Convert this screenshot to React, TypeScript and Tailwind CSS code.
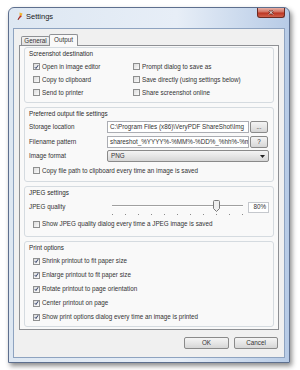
import React from "react";

const Check = ({ checked }: { checked?: boolean }) => (
  <div className="w-[7px] h-[7px] shrink-0 border border-[#8e8f8f] bg-[linear-gradient(135deg,#dcdcdc,#fbfbfb)] flex items-center justify-center">
    {checked && (
      <svg width="6" height="6" viewBox="0 0 6 6">
        <path d="M1 3.2 L2.4 4.8 L5 0.8" fill="none" stroke="#1f2f5c" strokeWidth="1.1" />
      </svg>
    )}
  </div>
);

const CheckRow = ({ label, checked, h = "h-[13px]" }: { label: string; checked?: boolean; h?: string }) => (
  <div className={`${h} flex items-center gap-[2px]`}>
    <Check checked={checked} />
    <span className="whitespace-nowrap">{label}</span>
  </div>
);

const Group = ({ title, children, className }: { title: string; children: React.ReactNode; className?: string }) => (
  <div className={`border border-[#d5dbe0] rounded-[3px] pl-[8px] pr-[4px] ${className ?? ""}`}>
    <div className="h-[12px] flex items-center -ml-[4px] text-[#2a2a2a]">{title}</div>
    {children}
  </div>
);

const WinButton = ({ children, className }: { children: React.ReactNode; className?: string }) => (
  <div
    className={`border border-[#8a8a8a] rounded-[2px] bg-[linear-gradient(#f4f4f4,#e6e6e6_50%,#d6d6d6)] flex items-center justify-center ${className ?? ""}`}
  >
    {children}
  </div>
);

export default function App() {
  const ticks = Array.from({ length: 11 });
  return (
    <div className="w-[300px] h-[370px] bg-white pt-[7px] pl-[8px] font-['Liberation_Sans',Arial,sans-serif] text-[6.3px] text-[#333]">
      {/* window frame */}
      <div className="w-[282px] h-[356px] rounded-t-[6px] border border-[#5d6f8e] bg-[linear-gradient(90deg,#dde7f2,#e7eef7_60%,#b7cbe6)] shadow-[2px_3px_5px_rgba(0,0,0,0.45)] flex flex-col">
        {/* title bar */}
        <div className="h-[20px] flex items-start">
          <svg className="ml-[8px] mt-[4px]" width="6" height="9" viewBox="0 0 6 9">
            <path d="M1 8 L3 3 L5 4 Z" fill="#c0281e" />
            <path d="M2.5 0.5 L5.5 1.5 L4.6 4 L2.6 3 Z" fill="#f2b630" />
            <path d="M1 8 L2 5.5" stroke="#7a1a12" strokeWidth="0.8" />
          </svg>
          <span className="ml-[3px] mt-[4px] text-[7.5px] leading-[9px] text-[#1a1a1a]">Settings</span>
          <div className="ml-auto mr-[4px] w-[28px] h-[10px] rounded-b-[3px] border border-t-0 border-[#6b2a22] bg-[linear-gradient(#e8b0a6,#d1705f_45%,#bc3522_55%,#d0624c)] flex items-center justify-center">
            <svg width="6" height="5" viewBox="0 0 6 5">
              <path d="M1 0.5 L5 4.5 M5 0.5 L1 4.5" stroke="#5a1a12" strokeWidth="1.8" />
              <path d="M1 0.5 L5 4.5 M5 0.5 L1 4.5" stroke="#ffffff" strokeWidth="1" />
            </svg>
          </div>
        </div>

        {/* client */}
        <div className="mx-[4px] mb-[4px] flex-1 border border-[#8ea3c0] bg-[#f0f0f0] flex flex-col px-[5px]">
          {/* tabs */}
          <div className="h-[16px] flex items-end pl-[2px]">
            <div className="h-[9px] w-[29px] border border-b-0 border-[#8e9094] rounded-t-[2px] bg-[linear-gradient(#f3f3f3,#dfdfdf)] flex items-center justify-center">
              General
            </div>
            <div className="h-[12px] w-[29px] -ml-[1px] border border-b-0 border-[#8e9094] rounded-t-[2px] bg-[#f9f9f9] flex items-center justify-center relative top-[1px] z-10 pb-[2px]">
              Output
            </div>
          </div>

          {/* panel */}
          <div className="h-[285px] border border-[#8e9094] bg-[#f9f9f9] px-[4px] pt-[1px] pb-[2px] flex flex-col gap-[4px]">
            <Group title="Screenshot destination" className="h-[56px]">
              <div className="flex">
                <div className="w-[100px] flex flex-col">
                  <CheckRow label="Open in image editor" checked />
                  <CheckRow label="Copy to clipboard" />
                  <CheckRow label="Send to printer" />
                </div>
                <div className="flex flex-col">
                  <CheckRow label="Prompt dialog to save as" />
                  <CheckRow label="Save directly (using settings below)" />
                  <CheckRow label="Share screenshot online" />
                </div>
              </div>
            </Group>

            <Group title="Preferred output file settings" className="h-[75px]">
              <div className="-ml-[4px] flex flex-col">
                <div className="h-[14px] flex items-center">
                  <span className="w-[78px]">Storage location</span>
                  <div className="w-[142px] h-[12px] border border-[#abadb3] bg-white px-[2px] flex items-center overflow-hidden whitespace-nowrap">
                    <span>{"C:\\Program Files (x86)\\VeryPDF ShareShot\\Img"}</span>
                  </div>
                  <WinButton className="ml-[1px] w-[18px] h-[12px]">...</WinButton>
                </div>
                <div className="h-[15px] flex items-center">
                  <span className="w-[78px]">Filename pattern</span>
                  <div className="w-[142px] h-[12px] border border-[#abadb3] bg-white px-[2px] flex items-center overflow-hidden whitespace-nowrap">
                    <span>shareshot_%YYYY%-%MM%-%DD%_%hh%-%mm</span>
                  </div>
                  <WinButton className="ml-[1px] w-[18px] h-[12px]">?</WinButton>
                </div>
                <div className="h-[14px] flex items-center">
                  <span className="w-[78px]">Image format</span>
                  <WinButton className="w-[162px] h-[12px] !justify-between px-[3px]">
                    <span>PNG</span>
                    <svg width="5" height="3" viewBox="0 0 5 3">
                      <path d="M0 0 L5 0 L2.5 3 Z" fill="#222" />
                    </svg>
                  </WinButton>
                </div>
                <div className="h-[15px] pl-[4px]">
                  <CheckRow h="h-[15px]" label="Copy file path to clipboard every time an image is saved" />
                </div>
              </div>
            </Group>

            <Group title="JPEG settings" className="h-[51px]">
              <div className="-ml-[4px] flex flex-col">
                <div className="h-[16px] flex items-center">
                  <span className="w-[83px]">JPEG quality</span>
                  <div className="relative w-[131px] h-[16px]">
                    <div className="absolute left-0 right-0 top-[6px] h-[2px] border-t border-[#a0a0a0] border-b border-b-white bg-[#d8d8d8]" />
                    <svg className="absolute left-[101px] top-[1px]" width="7" height="12" viewBox="0 0 7 12">
                      <path
                        d="M1.5 0.5 H5.5 Q6.5 0.5 6.5 1.5 V8.5 L3.5 11.5 L0.5 8.5 V1.5 Q0.5 0.5 1.5 0.5 Z"
                        fill="#eeeeee"
                        stroke="#7a7a7a"
                      />
                    </svg>
                    <div className="absolute left-0 right-0 top-[15px] flex justify-between">
                      {ticks.map((_, i) => (
                        <div key={i} className="w-[1px] h-[1px] bg-[#8a8a8a]" />
                      ))}
                    </div>
                  </div>
                  <div className="ml-[5px] w-[21px] h-[11px] border border-[#c5c8cd] bg-white flex items-center justify-end pr-[2px]">
                    80%
                  </div>
                </div>
                <div className="pl-[4px]">
                  <CheckRow h="h-[18px]" label="Show JPEG quality dialog every time a JPEG image is saved" />
                </div>
              </div>
            </Group>

            <Group title="Print options" className="h-[86px]">
              <div className="flex flex-col">
                <CheckRow h="h-[14px]" label="Shrink printout to fit paper size" checked />
                <CheckRow h="h-[14px]" label="Enlarge printout to fit paper size" checked />
                <CheckRow h="h-[14px]" label="Rotate printout to page orientation" checked />
                <CheckRow h="h-[14px]" label="Center printout on page" checked />
                <CheckRow h="h-[14px]" label="Show print options dialog every time an image is printed" checked />
              </div>
            </Group>
          </div>

          {/* dialog buttons */}
          <div className="mt-[7px] flex justify-end gap-[5px] pr-[1px]">
            <WinButton className="w-[45px] h-[12px]">OK</WinButton>
            <WinButton className="w-[44px] h-[12px]">Cancel</WinButton>
          </div>
        </div>
      </div>
    </div>
  );
}
